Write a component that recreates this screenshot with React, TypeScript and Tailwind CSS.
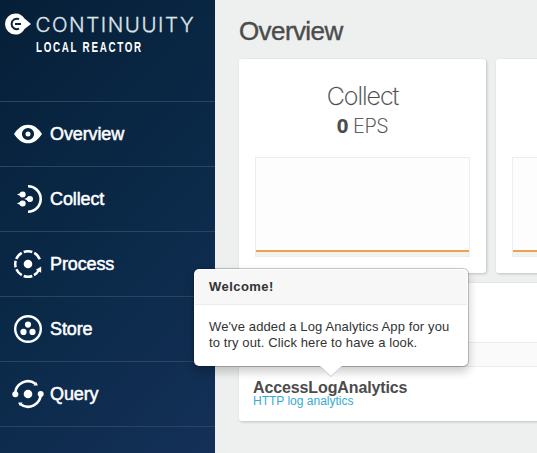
import type { ReactNode } from "react";

const EyeIcon = () => (
  <svg width="32" height="32" viewBox="0 0 32 32" className="shrink-0">
    <path d="M2 16 C6 10 10.5 6.8 16 6.8 S26 10 30 16 C26 22 21.500 25.300 16 25.300 S6 22 2 16Z" fill="#fff" />
    <circle cx="16" cy="16" r="4.300" fill="none" stroke="#08233f" strokeWidth="3.600" />
  </svg>
);

const Drop = ({ x, y }: { x: number; y: number }) => (
  <g fill="#fff">
    <circle cx={x} cy={y} r="3" />
    <path d={`M${x - 5.800} ${y} Q${x - 3} ${y - 0.700} ${x - 1} ${y - 2.900} V${y + 2.900} Q${x - 3} ${y + 0.700} ${x - 5.800} ${y}Z`} />
  </g>
);

const CollectIcon = () => (
  <svg width="32" height="32" viewBox="0 0 32 32" className="shrink-0">
    <path d="M16 3.300 A12.700 12.700 0 0 1 16 28.700" fill="none" stroke="#fff" strokeWidth="2.600" />
    <Drop x={10.700} y={11.600} />
    <Drop x={18} y={16} />
    <Drop x={10.700} y={20.500} />
  </svg>
);

const ProcessIcon = () => (
  <svg width="32" height="32" viewBox="0 0 32 32" className="shrink-0">
    <g fill="none" stroke="#fff" strokeWidth="2.500">
      <path d="M11.700 4 A12.750 12.750 0 0 1 20.300 4" />
      <path d="M22.200 4.900 A12.750 12.750 0 0 1 27.800 11.300" />
      <path d="M9.800 4.900 A12.750 12.750 0 0 0 4.200 11" />
      <path d="M3.600 12.800 A12.750 12.750 0 0 0 3.600 19.400" />
      <path d="M4.400 21.300 A12.750 12.750 0 0 0 9.800 27.200" />
      <path d="M11.700 28 A12.750 12.750 0 0 0 20.300 28" />
      <path d="M22 27.100 A12.750 12.750 0 0 0 27 22" />
    </g>
    <path d="M29.200 18.600 L23.800 21.700 L29.200 24.800Z" fill="#fff" />
    <circle cx="16" cy="16" r="4.300" fill="#fff" />
  </svg>
);

const StoreIcon = () => (
  <svg width="32" height="32" viewBox="0 0 32 32" className="shrink-0">
    <circle cx="16" cy="16" r="12.800" fill="none" stroke="#fff" strokeWidth="2.400" />
    <g fill="#fff">
      <circle cx="16" cy="11.600" r="3.100" />
      <circle cx="11.500" cy="18.900" r="3.100" />
      <circle cx="20.500" cy="18.900" r="3.100" />
    </g>
  </svg>
);

const QueryIcon = () => (
  <svg width="32" height="32" viewBox="0 0 32 32" className="shrink-0">
    <g fill="none" stroke="#fff" strokeWidth="2.600">
      <path d="M3.300 16 A12.700 12.700 0 0 1 23.500 5.700" />
      <path d="M28.700 16 A12.700 12.700 0 0 1 8.500 26.300" />
    </g>
    <g fill="#fff">
      <circle cx="3.300" cy="16.300" r="3" />
      <circle cx="28.700" cy="16" r="3" />
      <circle cx="16" cy="16" r="4.300" />
      <path d="M25.800 7.600 L21.300 7.600 L24.500 4.200Z" />
      <path d="M6.200 24.400 L10.700 24.400 L7.500 27.800Z" />
    </g>
  </svg>
);

const NavItem = ({ icon, label }: { icon: ReactNode; label: string }) => (
  <li className="flex h-[65px] items-center border-t border-[#31425d] pl-3">
    {icon}
    <span className="ml-1.5 text-lg tracking-[-0.120px] text-white [-webkit-text-stroke:0.5px_#fff]">{label}</span>
  </li>
);

const Sidebar = () => (
  <aside className="h-full w-[215px] shrink-0 bg-linear-[135deg,#061f38_0%,#0a2947_50%,#143058_100%]">
    <header className="h-[101px]">
      <div className="flex h-[38px] items-end pl-[5px]">
        <svg width="27" height="22" viewBox="0 0 27 22" className="mb-[3px] shrink-0">
          <path d="M10.500 0.500 C15 0.500 17.500 2.500 19.500 5.500 L26 11 L19.500 16 C17.500 19.500 15 21.500 10.500 21.500 A10.500 10.500 0 0 1 10.500 0.500Z" fill="#fff" />
          <path d="M14 6.200 A5.200 5.200 0 1 0 14 15.600 M10 10.900 H16" fill="none" stroke="#08233f" strokeWidth="2" />
        </svg>
        <span className="ml-[3.500px] font-[Inter] text-[20.500px] leading-[27px] font-light tracking-[1.550px] text-[#dfe4e8] [-webkit-text-stroke:0.3px_#dfe4e8]">
          CONTINUUITY
        </span>
      </div>
      <div className="pl-9 text-[14px] leading-[19px] font-bold text-white">
        <span className="inline-block origin-left scale-x-[0.700] tracking-[2.450px] whitespace-nowrap">LOCAL REACTOR</span>
      </div>
    </header>
    <ul className="border-b border-[#31425d]">
      <NavItem icon={<EyeIcon />} label="Overview" />
      <NavItem icon={<CollectIcon />} label="Collect" />
      <NavItem icon={<ProcessIcon />} label="Process" />
      <NavItem icon={<StoreIcon />} label="Store" />
      <NavItem icon={<QueryIcon />} label="Query" />
    </ul>
  </aside>
);

const MetricCard = ({ children }: { children?: ReactNode }) => (
  <section className="flex h-[214px] w-[247px] shrink-0 flex-col rounded-[3px] bg-white px-4 pt-[21px] shadow-[1px_1px_3px_rgba(0,0,0,0.2)]">
    <div className="h-[77px] text-center font-[Inter] font-extralight [-webkit-text-stroke:0.2px_#4c4c4c]">{children}</div>
    <div className="flex h-[100px] flex-col justify-end border border-[#eceeee] bg-[#fdfdfd]">
      <div className="h-0.5 bg-[#eda24d]" />
      <div className="h-[4px] bg-[#f1f3f3]" />
    </div>
  </section>
);

const WelcomePopover = () => (
  <div className="absolute top-[268px] left-[193px] h-[99px] w-[276px] rounded-[6px] border border-black/20 bg-white bg-clip-padding p-px text-[13px] text-[#333] shadow-[0_5px_10px_rgba(0,0,0,0.2)]">
    <h3 className="h-[35px] rounded-t-[5px] border-b border-[#ebebeb] bg-[#f7f7f7] pl-[14px] leading-[34px] font-bold tracking-[0.450px]">Welcome!</h3>
    <p className="pt-[14px] pl-[14px] leading-4 tracking-[0.120px] whitespace-nowrap">
      We've added a Log Analytics App for you
      <br />
      to try out. Click here to have a look.
    </p>
    <svg width="22" height="11" viewBox="0 0 22 11" className="absolute top-[97px] left-[126px]">
      <path d="M0 0 L11 10.500 L22 0Z" fill="#fff" />
      <path d="M0.500 0.500 L11 10.500 L21.500 0.500" fill="none" stroke="#c8c8c8" />
    </svg>
  </div>
);

export default function App() {
  return (
    <div className="relative flex h-[453px] w-[537px] overflow-hidden bg-[#eef0f0] font-['Liberation_Sans',Arial,sans-serif] text-[#4c4c4c]">
      <Sidebar />
      <main className="min-w-0 flex-1 pl-6">
        <h1 className="flex h-[59px] items-center pt-[3px] text-[26px] tracking-[-0.600px] [-webkit-text-stroke:0.4px_#4c4c4c]">Overview</h1>
        <div className="flex gap-2.5">
          <MetricCard>
            <h2 className="text-[25px] leading-[32px] tracking-[-1.050px]">Collect</h2>
            <p className="pt-px text-xl leading-[26px] tracking-[-0.500px]">
              <b className="font-['Liberation_Sans'] text-[21px] leading-none font-bold">0</b> EPS
            </p>
          </MetricCard>
          <MetricCard />
        </div>
        <section className="mt-2.5 h-[138px] w-[504px] rounded-[3px] bg-white shadow-[1px_1px_3px_rgba(0,0,0,0.2)]">
          <div className="h-[59px]" />
          <div className="h-[25px] border-y border-[#ececec] bg-[#fafafa]" />
          <div className="pt-3 pl-3.5">
            <div className="text-base leading-[17px] font-bold tracking-[-0.120px]">AccessLogAnalytics</div>
            <a className="block text-xs leading-[11px] text-[#33acd4]">HTTP log analytics</a>
          </div>
        </section>
      </main>
      <WelcomePopover />
    </div>
  );
}
